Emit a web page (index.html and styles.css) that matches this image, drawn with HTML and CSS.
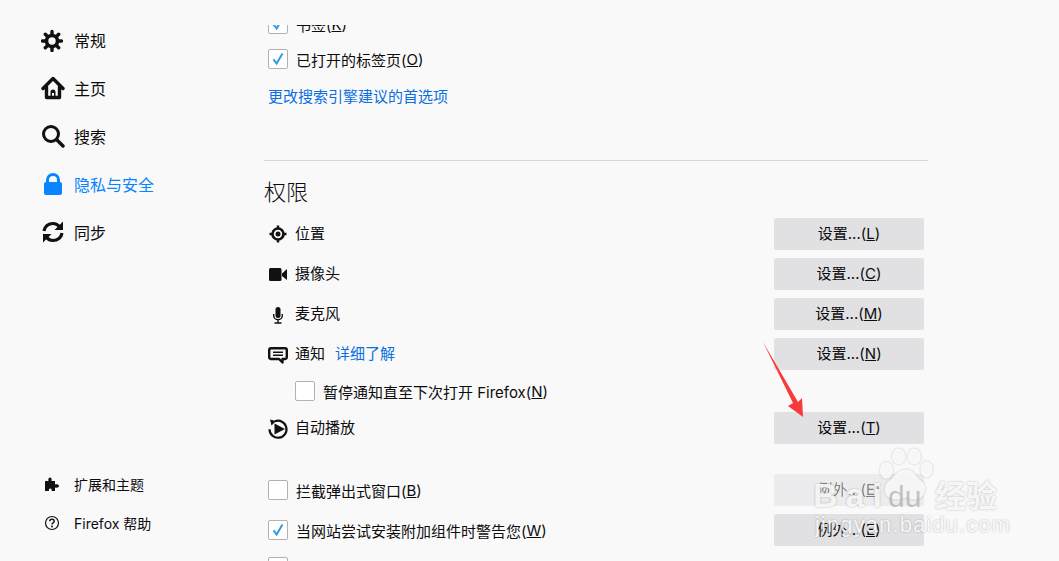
FILE: index.html
```html
<!DOCTYPE html>
<html lang="zh-CN">
  <head>
    <meta charset="UTF-8" />
    <title>选项</title>
    <link rel="stylesheet" href="styles.css">
  </head>
  <body>
    <div class="page">
      <nav class="sidebar">
        <div class="nav-list">
          <div class="nav-item">
            <svg class="nav-icon" viewBox="0 0 24 24"><g transform="translate(-1 1)"><circle cx="12" cy="12" r="5.500" fill="none" stroke="#111" stroke-width="3.600"/><path stroke="#111" stroke-width="3.400" stroke-linecap="round" d="M12 2.500v3M12 18.500v3M2.500 12h3M18.500 12h3M5.300 5.300l2 2M16.700 16.700l2 2M5.300 18.700l2-2M16.700 7.300l2-2"/></g></svg>
            <span>常规</span>
          </div>
          <div class="nav-item">
            <svg class="nav-icon" viewBox="0 0 24 24"><path fill="none" stroke="#111" stroke-width="3.400" stroke-linejoin="round" stroke-linecap="round" d="M2 12.500 12 2.500l10 10M5.500 10.500V21.500h13V10.500"/><path fill="#111" d="M9.500 22v-6a2.500 2.500 0 0 1 5 0V22h-1.500v-5h-2V22z"/></svg>
            <span>主页</span>
          </div>
          <div class="nav-item">
            <svg class="nav-icon" viewBox="0 0 24 24"><circle cx="10" cy="10" r="7.500" fill="none" stroke="#111" stroke-width="3"/><path stroke="#111" stroke-width="3.400" stroke-linecap="round" d="M15.500 15.500 22 22"/></svg>
            <span>搜索</span>
          </div>
          <div class="nav-item is-active">
            <svg class="nav-icon" viewBox="0 0 24 24"><path fill="#0a84ff" d="M5 10V8a7 7 0 0 1 14 0v2a2 2 0 0 1 2 2v9a2 2 0 0 1-2 2H5a2 2 0 0 1-2-2v-9a2 2 0 0 1 2-2zm3 0h8V8a4 4 0 0 0-8 0z"/></svg>
            <span>隐私与安全</span>
          </div>
          <div class="nav-item">
            <svg class="nav-icon" viewBox="0 0 24 24"><path fill="none" stroke="#111" stroke-width="3.200" d="M3 11C3.500 6.500 7.500 3.500 12 3.500c2.800 0 5 1.200 6.500 3.200M21 13c-.5 4.500-4.500 7.500-9 7.500-2.800 0-5-1.200-6.500-3.200"/><path fill="#111" d="M22 1.500V10h-8.500zM2 22.500V14h8.500z"/></svg>
            <span>同步</span>
          </div>
        </div>
        <div class="nav-footer">
          <div class="foot-item">
            <svg class="foot-icon" viewBox="0 0 16 16"><path fill="#111" d="M1 5h3.500C4 3.500 4.500 1.500 6 1.500S8 3.500 7.500 5H11v3.500c1.500-.5 4-.2 4 1.500s-2.500 2-4 1.500V15H7.500c.5-1.500 0-2.500-1.200-2.500S4.500 13.500 5 15H1z"/></svg>
            <span>扩展和主题</span>
          </div>
          <div class="foot-item">
            <svg class="foot-icon" viewBox="0 0 16 16"><circle cx="8" cy="8" r="6.500" fill="none" stroke="#111" stroke-width="1.200"/><path fill="none" stroke="#111" stroke-width="1.400" d="M5.800 6.300C5.800 5 6.800 4.300 8 4.300s2.200.7 2.200 1.900c0 1.700-2.200 1.600-2.200 3.300"/><circle cx="8" cy="11.500" r="1" fill="#111"/></svg>
            <span>Firefox 帮助</span>
          </div>
        </div>
      </nav>

      <main class="content">
        <div class="scroller">
          <label class="check-row first-row"><span class="box is-checked"><svg viewBox="0 0 20 20"><path d="M5 10.500 8.500 15 15 4"/></svg></span>书签(<u>K</u>)</label>
          <label class="check-row"><span class="box is-checked"><svg viewBox="0 0 20 20"><path d="M5 10.500 8.500 15 15 4"/></svg></span>已打开的标签页(<u>O</u>)</label>
          <a class="link pref-link">更改搜索引擎建议的首选项</a>
          <hr class="divider" />
          <h2 class="section-title">权限</h2>

          <div class="perm-row">
            <div class="perm-label">
              <svg class="perm-icon" viewBox="0 0 20 20"><circle cx="10" cy="10" r="5.500" fill="none" stroke="#111" stroke-width="2.600"/><circle cx="10" cy="10" r="2.500" fill="#111"/><path stroke="#111" stroke-width="2.400" d="M10 1.500v3M10 15.500v3M1.500 10h3M15.500 10h3"/></svg>
              <span>位置</span>
            </div>
            <button class="btn">设置...(<u>L</u>)</button>
          </div>
          <div class="perm-row">
            <div class="perm-label">
              <svg class="perm-icon" viewBox="0 0 20 20"><rect x="1" y="4" width="12.500" height="13" rx="1.500" fill="#111"/><path fill="#111" d="M14 9.500 19 5v11l-5-4z"/></svg>
              <span>摄像头</span>
            </div>
            <button class="btn">设置...(<u>C</u>)</button>
          </div>
          <div class="perm-row">
            <div class="perm-label">
              <svg class="perm-icon" viewBox="0 0 20 20"><rect x="7.500" y="3" width="5" height="11" rx="2.500" fill="#111"/><path fill="none" stroke="#111" stroke-width="1.400" d="M5.700 10v1.500a4.300 4.300 0 0 0 8.600 0V10M10 16v3M6.500 19h7"/></svg>
              <span>麦克风</span>
            </div>
            <button class="btn">设置...(<u>M</u>)</button>
          </div>
          <div class="perm-row">
            <div class="perm-label">
              <svg class="perm-icon" viewBox="0 0 20 20"><path fill="none" stroke="#111" stroke-width="2.400" stroke-linejoin="round" d="M3 4.200h14a1.800 1.800 0 0 1 1.800 1.800v7.200a1.800 1.800 0 0 1-1.800 1.800h-2.500v3.500l-3.500-3.500H3a1.800 1.800 0 0 1-1.800-1.800V6A1.800 1.800 0 0 1 3 4.200z"/><path stroke="#111" stroke-width="1.500" d="M5 8.300h10M5 11.300h10"/></svg>
              <span>通知</span>
              <a class="link learn-link">详细了解</a>
            </div>
            <button class="btn">设置...(<u>N</u>)</button>
          </div>
          <label class="check-row sub-row"><span class="box"></span>暂停通知直至下次打开 Firefox(<u>N</u>)</label>
          <div class="perm-row autoplay-row">
            <div class="perm-label">
              <svg class="perm-icon" viewBox="0 0 20 20"><path fill="none" stroke="#111" stroke-width="2.200" d="M7 3.300a8.500 8.500 0 1 1-5.500 8"/><path fill="#111" d="M2 1.500 8 3 3.500 7.500z"/><path fill="#111" d="M6.500 5.500 17 11 6.500 16.500z"/></svg>
              <span>自动播放</span>
            </div>
            <button class="btn">设置...(<u>T</u>)</button>
          </div>

          <div class="perm-row popup-row">
            <label class="check-row"><span class="box"></span>拦截弹出式窗口(<u>B</u>)</label>
            <button class="btn is-disabled">例外...(<u>E</u>)</button>
          </div>
          <div class="perm-row">
            <label class="check-row"><span class="box is-checked"><svg viewBox="0 0 20 20"><path d="M5 10.500 8.500 15 15 4"/></svg></span>当网站尝试安装附加组件时警告您(<u>W</u>)</label>
            <button class="btn">例外...(<u>E</u>)</button>
          </div>
          <label class="check-row last-row"><span class="box"></span></label>
        </div>
      </main>

      <svg class="arrow" viewBox="0 0 50 80"><path fill="#f93a3a" d="M3 2 38 62l4-4 1 19-15-11 5-3z"/></svg>

      <div class="watermark">
        <svg class="paw" viewBox="0 0 60 58"><ellipse cx="9" cy="23" rx="7" ry="9"/><ellipse cx="22" cy="8" rx="7" ry="8.500"/><ellipse cx="39" cy="8" rx="7" ry="8.500"/><ellipse cx="52" cy="22" rx="6.500" ry="8.500"/><path d="M30 22c8 0 11 8 17 13 7 6 3 20-8 19-5 0-6-2-9-2s-6 3-12 2C7 53 4 42 11 35c7-5 9-13 19-13z"/></svg>
        <div class="mark-top"><span class="mark-bai">Bai</span><span class="mark-du">du</span><span class="mark-cn">经验</span></div>
        <div class="mark-url">jingyan.baidu.com</div>
      </div>
    </div>
  </body>
</html>
```

FILE: styles.css
```css
html,
body {
  margin: 0;
  height: 100%;
}
body {
  background-color: #f9f9fa;
  color: #0c0c0d;
  font-family: Inter, "Noto Sans CJK SC", sans-serif;
  font-size: 15px;
  overflow: hidden;
}

.page {
  position: relative;
  display: flex;
  width: 1059px;
  height: 561px;
  overflow: hidden;
}

/* left menu */
.sidebar {
  width: 264px;
  flex: none;
  display: flex;
  flex-direction: column;
  justify-content: space-between;
  padding: 16px 0 19px 41px;
  box-sizing: border-box;
}
.nav-item {
  display: flex;
  align-items: center;
  height: 48px;
  font-size: 16px;
}
.nav-item.is-active {
  color: #0a84ff;
}
.nav-icon {
  width: 24px;
  height: 24px;
  margin-right: 9px;
}
.foot-item {
  display: flex;
  align-items: center;
  height: 39px;
  font-size: 14px;
}
.foot-icon {
  width: 16px;
  height: 16px;
  margin: 0 14px 0 3px;
}

/* main column */
.content {
  width: 664px;
  flex: none;
  margin-top: 25px;
  overflow: hidden;
}
.scroller {
  margin-top: -11px;
}
.check-row {
  display: flex;
  align-items: center;
  height: 20px;
  padding-left: 4px;
  white-space: nowrap;
}
.first-row {
  margin-bottom: 15px;
}
.box {
  width: 18px;
  height: 18px;
  flex: none;
  margin-right: 8px;
  border: 1px solid #b1b1b3;
  border-radius: 2px;
  background-color: #fff;
}
.box svg {
  display: block;
  width: 18px;
  height: 18px;
}
.box path {
  fill: none;
  stroke: #2f9ae0;
  stroke-width: 2.200;
}
.link {
  color: #0a6fe0;
}
.pref-link {
  display: block;
  margin: 18px 0 53px 4px;
  line-height: 20px;
}
.divider {
  margin: 0;
  border: 0;
  border-top: 1px solid #d7d7db;
}
.section-title {
  margin: 17px 0 12px;
  font-size: 22px;
  font-weight: 300;
  line-height: 28px;
}
.perm-row {
  display: flex;
  align-items: center;
  justify-content: space-between;
  height: 32px;
  margin-bottom: 8px;
  padding-right: 4px;
}
.perm-label {
  display: flex;
  align-items: center;
  padding-left: 4px;
}
.perm-label span,
.perm-label a {
  margin-bottom: 3px;
}
.perm-icon {
  width: 20px;
  height: 20px;
  margin-right: 7px;
  overflow: visible;
}
.learn-link {
  margin-left: 10px;
}
.btn {
  width: 150px;
  height: 32px;
  padding: 0 0 3px;
  border: 0;
  border-radius: 2px;
  background-color: #e1e1e3;
  color: inherit;
  font: inherit;
}
.btn.is-disabled {
  opacity: 0.5;
}
.sub-row {
  margin: 11px 0 0 27px;
}
.autoplay-row {
  margin-top: 11px;
}
.popup-row {
  margin-top: 30px;
}
.last-row {
  margin-top: 11px;
}

/* screenshot annotations */
.arrow {
  position: absolute;
  left: 760px;
  top: 340px;
  width: 50px;
  height: 80px;
}
.watermark {
  position: absolute;
  left: 813px;
  top: 447px;
  width: 200px;
  height: 100px;
  color: rgba(255, 255, 255, 0.9);
  font-family: "Liberation Sans", "Noto Sans CJK SC", sans-serif;
  text-shadow: 0 0 2px rgba(0, 0, 0, 0.3);
}
.paw {
  position: absolute;
  left: 65px;
  top: 1px;
  width: 56px;
  height: 56px;
  fill: rgba(255, 255, 255, 0.85);
  filter: drop-shadow(0 0 1px rgba(0, 0, 0, 0.25));
}
.mark-top {
  position: absolute;
  left: 0;
  top: 26px;
  display: flex;
  align-items: baseline;
  font-weight: 700;
  font-size: 34px;
  line-height: 44px;
}
.mark-bai {
  width: 75px;
  letter-spacing: 8px;
}
.mark-du {
  width: 47px;
  color: rgba(150, 150, 150, 0.55);
  font-size: 30px;
  font-weight: 400;
  text-shadow: none;
}
.mark-cn {
  font-size: 31px;
}
.mark-url {
  position: absolute;
  left: 2px;
  top: 65px;
  font-size: 22px;
  letter-spacing: 1.1px;
  line-height: 26px;
  white-space: nowrap;
}
```
